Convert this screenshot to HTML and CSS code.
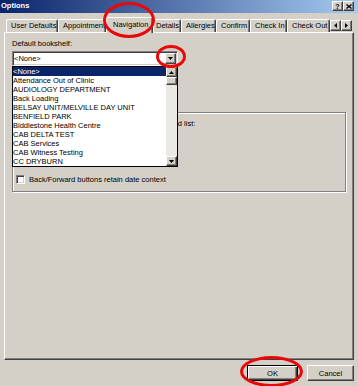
FILE: index.html
```html
<!DOCTYPE html>
<html>
<head>
<meta charset="utf-8">
<title>Options</title>
<link rel="stylesheet" href="styles.css">
</head>
<body>
<div class="window">
  <div class="titlebar">
    <span class="title">Options</span>
    <div class="tb-btns">
      <span class="tb-btn">?</span>
      <span class="tb-btn"><svg width="6" height="5" viewBox="0 0 6 5"><path d="M0.5 0.5 L5.5 4.5 M5.5 0.5 L0.5 4.5" stroke="#000" stroke-width="1.3" fill="none"/></svg></span>
    </div>
  </div>
  <div class="client">
    <div class="tabrow">
      <div class="tabs">
        <div class="tab t-user">User Defaults</div>
        <div class="tab t-appt">Appointment</div>
        <div class="tab active t-nav">Navigation</div>
        <div class="tab t-det">Details</div>
        <div class="tab t-all">Allergies</div>
        <div class="tab t-conf">Confirm</div>
        <div class="tab t-in">Check In</div>
        <div class="tab t-out">Check Out</div>
      </div>
      <div class="tabscroll">
        <span class="sbtn"><svg width="3" height="5" viewBox="0 0 3 5"><path d="M3 0 L0 2.5 L3 5 Z" fill="#000"/></svg></span>
        <span class="sbtn"><svg width="3" height="5" viewBox="0 0 3 5"><path d="M0 0 L3 2.5 L0 5 Z" fill="#000"/></svg></span>
      </div>
    </div>
    <div class="panel">
      <div class="label">Default bookshelf:</div>
      <div class="combo-wrap">
        <div class="combo">
          <span class="combo-text">&lt;None&gt;</span>
          <span class="combo-btn"><svg width="5" height="3" viewBox="0 0 5 3"><path d="M0 0 L5 0 L2.5 3 Z" fill="#000"/></svg></span>
        </div>
        <div class="droplist">
          <div class="items">
            <div class="item sel">&lt;None&gt;</div>
            <div class="item">Attendance Out of Clinic</div>
            <div class="item">AUDIOLOGY DEPARTMENT</div>
            <div class="item">Back Loading</div>
            <div class="item">BELSAY UNIT/MELVILLE DAY UNIT</div>
            <div class="item">BENFIELD PARK</div>
            <div class="item">Biddlestone Health Centre</div>
            <div class="item">CAB DELTA TEST</div>
            <div class="item">CAB Services</div>
            <div class="item">CAB Witness Testing</div>
            <div class="item">CC DRYBURN</div>
          </div>
          <div class="vscroll">
            <span class="vbtn"><svg width="5" height="3" viewBox="0 0 5 3"><path d="M0 3 L5 3 L2.5 0 Z" fill="#000"/></svg></span>
            <span class="thumb"></span>
            <span class="track"></span>
            <span class="vbtn"><svg width="5" height="3" viewBox="0 0 5 3"><path d="M0 0 L5 0 L2.5 3 Z" fill="#000"/></svg></span>
          </div>
        </div>
      </div>
      <div class="group">
        <div class="glabel">Bookshelves in preferred list:</div>
        <div class="check"><span class="box"></span><span>Back/Forward buttons retain date context</span></div>
      </div>
    </div>
    <div class="footer">
      <button class="btn ok">OK</button>
      <button class="btn cancel">Cancel</button>
    </div>
  </div>
  <div class="mark mark-nav"></div>
  <div class="mark mark-combo"></div>
  <div class="mark mark-ok"></div>
</div>
</body>
</html>
```
FILE: styles.css
```css
* { box-sizing: border-box; }
html, body { margin: 0; padding: 0; }
body {
  width: 358px;
  height: 386px;
  overflow: hidden;
  background: #d4d0c8;
  font-family: "Liberation Sans", Arial, sans-serif;
  font-size: 7.5px;
  color: #000;
}
.window {
  position: relative;
  width: 358px;
  height: 386px;
  background: #d4d0c8;
  overflow: hidden;
}
.titlebar {
  height: 13px;
  display: flex;
  justify-content: space-between;
  padding: 0 4px 0 1px;
  background: linear-gradient(to right, #0a246a, #a6caf0);
}
.title {
  color: #fff;
  font-weight: bold;
  line-height: 12px;
}
.tb-btns {
  display: flex;
  margin-top: 1px;
}
.tb-btn {
  width: 11px;
  height: 10px;
  background: #d4d0c8;
  border-top: 1px solid #fff;
  border-left: 1px solid #fff;
  border-right: 1px solid #404040;
  border-bottom: 1px solid #404040;
  box-shadow: inset -1px -1px 0 #808080;
  display: flex;
  align-items: center;
  justify-content: center;
  font-weight: bold;
  font-size: 7px;
  line-height: 1;
}
.client { padding-top: 4px; }
.tabrow {
  display: flex;
  height: 15px;
  padding-left: 6px;
}
.tabs {
  display: flex;
  align-items: flex-end;
  flex: none;
  width: 324px;
  height: 16px;
  overflow: hidden;
  position: relative;
  z-index: 1;
}
.tab {
  flex: none;
  height: 13px;
  margin-bottom: 1px;
  padding-left: 4px;
  line-height: 11px;
  white-space: nowrap;
  overflow: hidden;
  background: #d4d0c8;
  border-top: 1px solid #fff;
  border-left: 1px solid #fff;
  border-right: 1px solid #404040;
  border-radius: 2px 2px 0 0;
  box-shadow: inset -1px 0 0 #808080;
}
.tab.active {
  height: 16px;
  margin-bottom: 0;
  padding-left: 6px;
  line-height: 14px;
}
.t-user { width: 52px; }
.t-appt { width: 48px; }
.t-nav { width: 47px; }
.t-det { width: 28px; padding-left: 2px; }
.t-all { width: 35px; }
.t-conf { width: 34px; }
.t-in { width: 37px; }
.t-out { width: 43px; }
.tabscroll {
  display: flex;
  margin-top: 3px;
}
.sbtn, .vbtn, .combo-btn, .thumb {
  background: #d4d0c8;
  border-top: 1px solid #fff;
  border-left: 1px solid #fff;
  border-right: 1px solid #404040;
  border-bottom: 1px solid #404040;
  box-shadow: inset -1px -1px 0 #808080;
  display: flex;
  align-items: center;
  justify-content: center;
}
.sbtn { width: 11px; height: 11px; }
.panel {
  margin-left: 4px;
  width: 350px;
  height: 328px;
  border-top: 1px solid #fff;
  border-left: 1px solid #fff;
  border-right: 1px solid #404040;
  border-bottom: 1px solid #404040;
  box-shadow: inset -1px -1px 0 #808080;
  padding: 6px 0 0 7px;
}
.label { height: 9px; line-height: 9px; }
.combo-wrap {
  position: relative;
  margin-top: 3px;
  width: 166px;
}
.combo {
  height: 15px;
  display: flex;
  align-items: center;
  background: #fff;
  border: 1px solid;
  border-color: #808080 #fff #fff #808080;
  box-shadow: inset 1px 1px 0 #404040, inset -1px -1px 0 #d4d0c8;
  padding: 1px;
}
.combo-text {
  flex: 1;
  line-height: 11px;
}
.combo-btn { width: 11px; height: 11px; }
.droplist {
  position: absolute;
  top: 100%;
  left: 0;
  width: 166px;
  display: flex;
  background: #fff;
  border: 1px solid #000;
  z-index: 2;
}
.items { flex: 1; }
.item {
  height: 9px;
  line-height: 9px;
  white-space: nowrap;
  overflow: hidden;
}
.item.sel {
  background: #0a246a;
  color: #fff;
}
.vscroll {
  width: 11px;
  display: flex;
  flex-direction: column;
  background: #ebe9e4;
}
.vbtn { height: 10px; }
.thumb { height: 8px; }
.track { flex: 1; }
.group {
  margin-top: 46px;
  width: 334px;
  height: 80px;
  border: 1px solid #808080;
  box-shadow: inset 1px 1px 0 #fff, 1px 1px 0 #fff;
  padding: 6px 0 0 3px;
}
.glabel {
  padding-left: 83px;
  line-height: 9px;
  white-space: nowrap;
}
.check {
  display: flex;
  align-items: center;
  gap: 4px;
  margin-top: 47px;
  height: 9px;
  line-height: 9px;
}
.box {
  width: 9px;
  height: 9px;
  background: #fff;
  border: 1px solid;
  border-color: #808080 #fff #fff #808080;
  box-shadow: inset 1px 1px 0 #404040, inset -1px -1px 0 #d4d0c8;
}
.footer {
  display: flex;
  justify-content: flex-end;
  gap: 9px;
  padding-right: 4px;
  margin-top: 5px;
}
.btn {
  font: inherit;
  color: #000;
  height: 16px;
  padding: 0;
  background: #d4d0c8;
  border-top: 1px solid #fff;
  border-left: 1px solid #fff;
  border-right: 1px solid #404040;
  border-bottom: 1px solid #404040;
  box-shadow: inset -1px -1px 0 #808080;
}
.btn.ok {
  width: 51px;
  border: 1px solid #000;
  box-shadow: inset 1px 1px 0 #fff, inset -1px -1px 0 #404040, inset -2px -2px 0 #808080;
}
.btn.cancel { width: 47px; }
.mark {
  position: absolute;
  border: 3px solid #e80808;
  border-radius: 50%;
  z-index: 5;
}
.mark-nav { left: 103px; top: 2px; width: 52px; height: 36px; }
.mark-combo { left: 156px; top: 45px; width: 30px; height: 23px; }
.mark-ok { left: 240px; top: 356px; width: 63px; height: 31px; }
```
